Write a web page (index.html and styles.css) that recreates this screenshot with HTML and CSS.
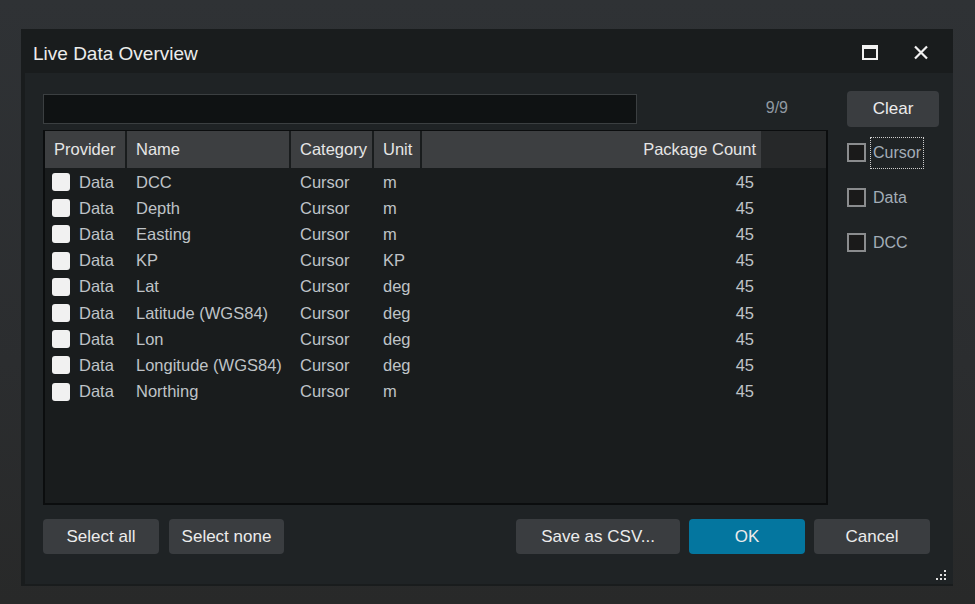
FILE: index.html
```html
<!DOCTYPE html>
<html lang="en">
<head>
  <meta charset="UTF-8" />
  <title>Live Data Overview</title>
  <link rel="stylesheet" href="styles.css">
</head>
<body>
  <div class="window">
    <div class="titlebar">
      <span class="title">Live Data Overview</span>
      <div class="win-buttons">
        <svg class="win-icon" width="16" height="15" viewBox="0 0 16 15">
          <rect x="1" y="1" width="14" height="13" fill="none" stroke="#f2f2f2" stroke-width="2"/>
          <rect x="1" y="1" width="14" height="3" fill="#f2f2f2"/>
        </svg>
        <svg class="win-icon" width="16" height="15" viewBox="0 0 16 15">
          <path d="M2 1.5 L14 13.5 M14 1.5 L2 13.5" stroke="#f2f2f2" stroke-width="2.2" fill="none"/>
        </svg>
      </div>
    </div>

    <div class="content">
      <div class="top">
        <div class="main">
          <div class="search-row">
            <input class="search" type="text" />
            <span class="count">9/9</span>
          </div>

          <div class="data-table">
            <div class="row head">
              <div class="cell">Provider</div>
              <div class="cell">Name</div>
              <div class="cell">Category</div>
              <div class="cell">Unit</div>
              <div class="cell num">Package Count</div>
              <div class="cell filler"></div>
            </div>
            <div class="rows" id="rows"></div>
          </div>
        </div>

        <div class="side">
          <button class="btn clear">Clear</button>
          <div class="filters">
            <label class="filter"><span class="box"></span><span class="filter-text focused">Cursor</span></label>
            <label class="filter"><span class="box"></span><span class="filter-text">Data</span></label>
            <label class="filter"><span class="box"></span><span class="filter-text">DCC</span></label>
          </div>
        </div>
      </div>

      <div class="actions">
        <button class="btn">Select all</button>
        <button class="btn second">Select none</button>
        <div class="spacer"></div>
        <button class="btn wide">Save as CSV...</button>
        <button class="btn primary">OK</button>
        <button class="btn">Cancel</button>
      </div>

      <svg class="grip" width="12" height="12" viewBox="0 0 12 12">
        <rect x="9" y="0" width="2" height="2" fill="#e0e0e0"/>
        <rect x="5" y="4" width="2" height="2" fill="#e0e0e0"/>
        <rect x="9" y="4" width="2" height="2" fill="#e0e0e0"/>
        <rect x="1" y="8" width="2" height="2" fill="#e0e0e0"/>
        <rect x="5" y="8" width="2" height="2" fill="#e0e0e0"/>
        <rect x="9" y="8" width="2" height="2" fill="#e0e0e0"/>
      </svg>
    </div>
  </div>

  <script>
    const items = [
      ["DCC", "m"],
      ["Depth", "m"],
      ["Easting", "m"],
      ["KP", "KP"],
      ["Lat", "deg"],
      ["Latitude (WGS84)", "deg"],
      ["Lon", "deg"],
      ["Longitude (WGS84)", "deg"],
      ["Northing", "m"]
    ];
    const rows = document.getElementById("rows");
    items.forEach(([name, unit]) => {
      const row = document.createElement("div");
      row.className = "row";
      row.innerHTML = `
        <div class="cell provider"><span class="check"></span>Data</div>
        <div class="cell">${name}</div>
        <div class="cell">Cursor</div>
        <div class="cell">${unit}</div>
        <div class="cell num">45</div>
        <div class="cell filler"></div>
      `;
      rows.appendChild(row);
    });
  </script>
</body>
</html>
```

FILE: styles.css
```css
* {
  box-sizing: border-box;
  margin: 0;
  padding: 0;
}

body {
  background: linear-gradient(180deg, #2f3235 0%, #2b2d2f 60%, #282929 100%);
  font-family: 'Liberation Sans', Arial, sans-serif;
  width: 975px;
  height: 604px;
  overflow: hidden;
  padding: 29px 0 0 21px;
}

.window {
  width: 932px;
  height: 557px;
  background-color: #191c1d;
  display: flex;
  flex-direction: column;
  padding: 0 0 2px 4px;
}

.titlebar {
  height: 44px;
  display: flex;
  align-items: center;
  padding: 0 24px 0 8px;
}

.title {
  color: #ececec;
  font-size: 19px;
  flex: 1;
  padding-top: 6px;
}

.win-buttons {
  display: flex;
  gap: 35px;
  align-items: center;
  padding-top: 2px;
}

.content {
  flex: 1;
  background-color: #1f2325;
  padding: 18px 14px 0 18px;
  position: relative;
}

.top {
  display: grid;
  grid-template-columns: 785px 92px;
  column-gap: 19px;
}

.search-row {
  height: 36px;
  display: flex;
  align-items: center;
}

.search {
  width: 594px;
  height: 30px;
  background-color: #0f1213;
  border: 1px solid #3b3f41;
  outline: none;
  color: #ddd;
}

.count {
  margin-left: auto;
  margin-right: 40px;
  color: #9099a2;
  font-size: 16px;
  padding-bottom: 2px;
}

.data-table {
  margin-top: 3px;
  height: 375px;
  background-color: #191c1d;
  border: 2px solid #0b0d0e;
  border-top-width: 1px;
}

.row {
  display: grid;
  grid-template-columns: 80px 162px 81px 46px 339px 1fr;
  column-gap: 2px;
  height: 26.2px;
  align-items: center;
  color: #bfc3c7;
  font-size: 16.5px;
}

.row.head {
  height: 37px;
  align-items: stretch;
  color: #e6e6e6;
  margin-bottom: 1px;
}

.row.head .cell {
  background-color: #3d3f41;
  display: flex;
  align-items: center;
  padding-left: 9px;
}

.row.head .cell.num {
  justify-content: flex-end;
  padding-right: 5px;
}

.row.head .cell.filler {
  background-color: #262829;
  margin-left: -2px;
}

.row .cell {
  padding-left: 9px;
  white-space: nowrap;
}

.row .cell.num {
  text-align: right;
  padding-right: 7px;
}

.cell.provider {
  display: flex;
  align-items: center;
  padding-left: 7px;
  gap: 9px;
}

.check {
  width: 18px;
  height: 18px;
  background-color: #f1f1f1;
  border-radius: 3px;
}

.btn {
  background-color: #3a3d40;
  color: #ececec;
  border: none;
  border-radius: 4px;
  font-family: 'Liberation Sans', Arial, sans-serif;
  font-size: 17px;
  height: 35px;
  width: 116px;
}

.btn.clear {
  width: 92px;
  height: 36px;
}

.btn.wide {
  width: 164px;
}

.btn.primary {
  background-color: #04769f;
}

.btn.second {
  width: 115px;
  margin-left: 1px;
}

.filters {
  margin-top: 3px;
  display: flex;
  flex-direction: column;
}

.filter {
  height: 45px;
  display: flex;
  align-items: center;
  gap: 4px;
}

.box {
  width: 19px;
  height: 19px;
  border: 2px solid #8a8c8e;
  background-color: #1a1a1a;
}

.filter-text {
  color: #a3adb7;
  font-size: 16px;
  padding: 6px 2px;
  border: 1px dotted transparent;
}

.filter-text.focused {
  border-color: #cfcfcf;
}

.actions {
  display: flex;
  gap: 9px;
  margin-top: 14px;
  padding-right: 9px;
}

.spacer {
  flex: 1;
}

.grip {
  position: absolute;
  right: 6px;
  bottom: 2px;
}
```
